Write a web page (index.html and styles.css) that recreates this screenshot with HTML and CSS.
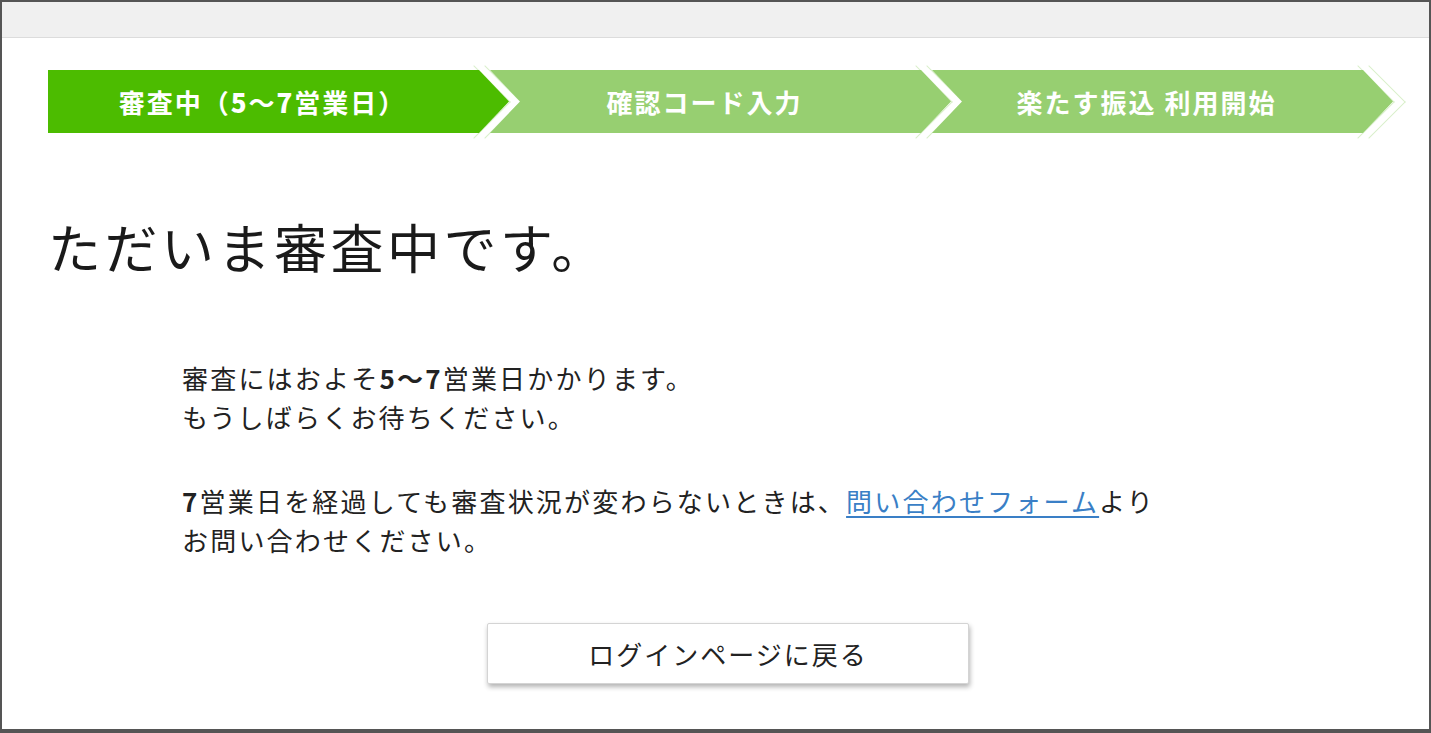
FILE: index.html
```html
<!DOCTYPE html>
<html lang="ja">
<head>
  <meta charset="UTF-8">
  <meta name="viewport" content="width=device-width, initial-scale=1.0">
  <title>審査中</title>
  <link rel="stylesheet" href="styles.css">
</head>
<body>
  <div class="frame">
    <div class="topbar"></div>

    <div class="content">
      <ol class="steps">
        <li class="step current"><span class="step-label">審査中（<b>5</b>～<b>7</b>営業日）</span></li>
        <li class="step"><span class="step-label">確認コード入力</span></li>
        <li class="step"><span class="step-label">楽たす振込 利用開始</span></li>
      </ol>

      <h1 class="title">ただいま審査中です。</h1>

      <div class="message">
        <p>審査にはおよそ<b>5～7</b>営業日かかります。<br>もうしばらくお待ちください。</p>
        <p><b>7</b>営業日を経過しても審査状況が変わらないときは、<a href="#">問い合わせフォーム</a>より<br>お問い合わせください。</p>
      </div>

      <button class="back-btn" type="button">ログインページに戻る</button>
    </div>
  </div>
</body>
</html>
```

FILE: styles.css
```css
* {
  margin: 0;
  padding: 0;
  box-sizing: border-box;
}

html, body {
  height: 100%;
}

body {
  font-family: "Noto Sans CJK JP", "Noto Sans", sans-serif;
  color: #222;
  background: #fff;
}

.frame {
  height: 100%;
  border: 2px solid #555;
  border-bottom-width: 4px;
  overflow: hidden;
}

.topbar {
  height: 36px;
  background-color: #f0f0f0;
  border-bottom: 1px solid #dcdcdc;
}

.content {
  padding: 0 36px 0 46px;
}

/* step bar */
.steps {
  list-style: none;
  display: flex;
  height: 63px;
  margin-top: 32px;
}

.step {
  flex: 1;
  position: relative;
  margin-left: -19px;
}

.step:first-child {
  margin-left: 0;
}

.step::before,
.step::after {
  content: "";
  position: absolute;
  top: 6px;
  width: 51px;
  height: 51px;
  border-top: 1px solid #d9efcb;
  border-right: 1px solid #d9efcb;
  transform: rotate(45deg);
  z-index: 0;
}

.step::before {
  left: calc(100% - 61px);
}

.step::after {
  left: calc(100% - 50px);
}

.step-label {
  position: relative;
  z-index: 1;
  display: flex;
  align-items: center;
  justify-content: center;
  height: 100%;
  padding-right: 32px;
  background-color: #97cf71;
  color: #fff;
  font-size: 26px;
  font-weight: 700;
  letter-spacing: 2px;
  white-space: nowrap;
  clip-path: polygon(0 0, calc(100% - 30px) 0, 100% 50%, calc(100% - 30px) 100%, 0 100%, 30px 50%);
}

.step.current .step-label {
  background-color: #4cbc00;
  clip-path: polygon(0 0, calc(100% - 30px) 0, 100% 50%, calc(100% - 30px) 100%, 0 100%);
}

/* heading */
.title {
  margin-top: 82px;
  font-size: 53px;
  font-weight: 400;
  line-height: 62px;
  letter-spacing: 3.5px;
  color: #1a1a1a;
}

/* message */
.message {
  margin-top: 81px;
  padding-left: 134px;
  font-size: 26px;
  line-height: 39px;
  letter-spacing: 2.2px;
}

.message p + p {
  margin-top: 45px;
}

.message b {
  font-weight: 700;
}

.message a {
  color: #3a7fc6;
  text-decoration: underline;
  text-underline-offset: 4px;
}

.back-btn {
  display: block;
  width: 482px;
  height: 61px;
  margin: 64px 0 0 439px;
  border: 1px solid #d4d4d4;
  border-radius: 2px;
  background-color: #fff;
  box-shadow: 1px 3px 5px rgba(0, 0, 0, 0.3);
  font-family: inherit;
  font-size: 26px;
  letter-spacing: 2px;
  color: #222;
  cursor: pointer;
}
```
